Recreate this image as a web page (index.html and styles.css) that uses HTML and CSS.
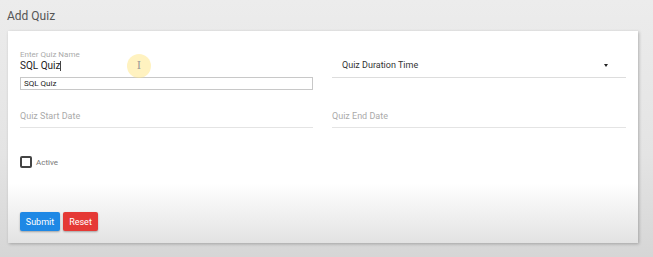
FILE: index.html
```html
<!DOCTYPE html>
<html lang="en">

<head>
  <meta charset="UTF-8">
  <meta name="viewport" content="width=device-width, initial-scale=1.0">
  <title>Add Quiz</title>
  <link rel="stylesheet" href="styles.css">
</head>

<body>
  <h1 class="titulo">Add Quiz</h1>

  <div class="card">
    <div class="grade">
      <!-- Nome do quiz -->
      <div class="campo-nome">
        <div class="rotulo">Enter Quiz Name</div>
        <div class="valor">SQL Quiz<span class="caret"></span></div>
        <input class="caixa" type="text" value="SQL Quiz">
      </div>

      <!-- Duração -->
      <div class="campo-select">
        <span>Quiz Duration Time</span>
        <span class="seta"></span>
      </div>

      <div class="campo-data">Quiz Start Date</div>
      <div class="campo-data">Quiz End Date</div>
    </div>

    <label class="ativo">
      <span class="check"></span>
      <span>Active</span>
    </label>

    <div class="botoes">
      <button class="btn btn-submit">Submit</button>
      <button class="btn btn-reset">Reset</button>
    </div>
  </div>

  <!-- cursor da gravação -->
  <div class="cursor">I</div>
</body>

</html>
```

FILE: styles.css
```css
body {
  margin: 0;
  font-family: Roboto, "Liberation Sans", sans-serif;
  background: linear-gradient(#ececec, #e4e4e4 60%, #d6d6d6);
  height: 257px;
  overflow: hidden;
}

.titulo {
  margin: 0;
  height: 31px;
  line-height: 32px;
  padding-left: 7px;
  font-size: 12px;
  font-weight: 400;
  color: #555;
}

.card {
  margin-left: 8px;
  width: 630px;
  box-sizing: border-box;
  padding: 19px 12px 12px;
  background: linear-gradient(#fff 0, #fff 152px, #e2e2e2 213px);
  box-shadow: 1px 1px 3px rgba(0, 0, 0, 0.25);
}

.grade {
  display: grid;
  grid-template-columns: 293px 294px;
  column-gap: 19px;
  row-gap: 19px;
}

.rotulo {
  font-size: 8px;
  line-height: 10px;
  color: #aaa;
}

.valor {
  font-size: 10px;
  line-height: 12px;
  color: #222;
}

.caret {
  display: inline-block;
  width: 1px;
  height: 10px;
  background: #444;
  vertical-align: -2px;
}

.caixa {
  display: block;
  margin: 5px 0 0;
  width: 100%;
  height: 13px;
  box-sizing: border-box;
  border: 1px solid #c8c8c8;
  padding: 0 3px;
  font-family: inherit;
  font-size: 8px;
  color: #222;
  outline: none;
}

.campo-select {
  margin-top: 8px;
  align-self: start;
  display: flex;
  justify-content: space-between;
  align-items: center;
  height: 14px;
  padding: 0 18px 5px 10px;
  border-bottom: 1px solid #ddd;
  font-size: 9px;
  color: #333;
}

.seta {
  width: 0;
  height: 0;
  border-left: 2.5px solid transparent;
  border-right: 2.5px solid transparent;
  border-top: 3px solid #222;
}

.campo-data {
  height: 14px;
  line-height: 14px;
  padding-bottom: 4px;
  border-bottom: 1px solid #e4e4e4;
  font-size: 9px;
  color: #aaa;
}

.ativo {
  margin-top: 28px;
  display: flex;
  align-items: center;
  gap: 4px;
  height: 12px;
  font-size: 8px;
  color: #777;
}

.check {
  width: 12px;
  height: 12px;
  box-sizing: border-box;
  border: 2px solid #444;
  border-radius: 2px;
}

.botoes {
  margin-top: 44px;
  display: flex;
  gap: 3px;
}

.btn {
  height: 19px;
  padding: 0;
  border: none;
  border-radius: 2px;
  color: #fff;
  font-family: inherit;
  font-size: 9px;
  box-shadow: 0 1px 2px rgba(0, 0, 0, 0.3);
}

.btn-submit {
  width: 40px;
  background-color: #1e88e5;
}

.btn-reset {
  width: 35px;
  background-color: #e53935;
}

.cursor {
  position: absolute;
  left: 127px;
  top: 54px;
  width: 24px;
  height: 24px;
  border-radius: 50%;
  background: rgba(255, 232, 140, 0.55);
  text-align: center;
  line-height: 24px;
  font-family: "DejaVu Serif", serif;
  font-size: 11px;
  color: #999;
}
```
